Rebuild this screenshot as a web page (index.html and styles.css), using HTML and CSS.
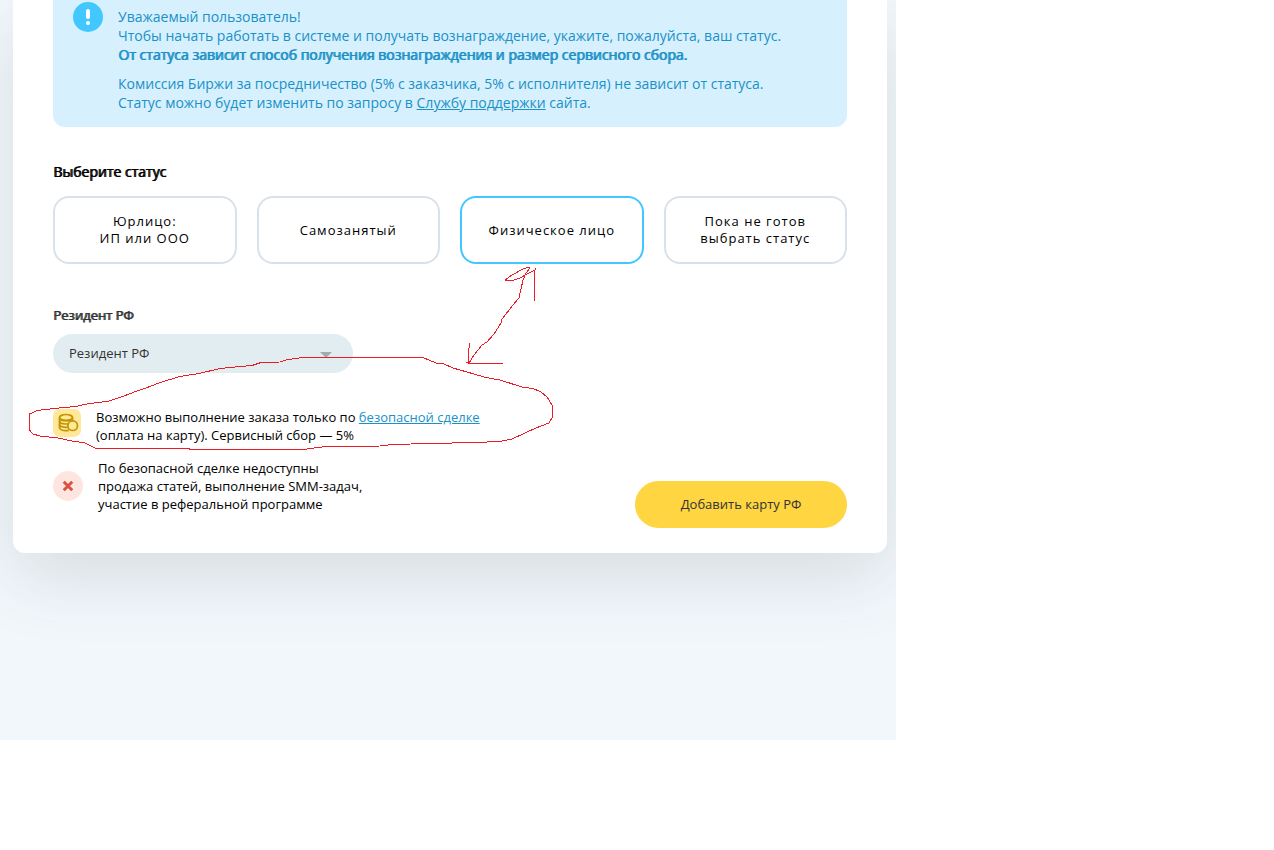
FILE: index.html
```html
<!DOCTYPE html>
<html lang="ru">
<head>
    <meta charset="UTF-8">
    <meta name="viewport" content="width=device-width, initial-scale=1.0">
    <title>Выбор статуса</title>
    <link rel="stylesheet" href="styles.css">
</head>
<body>

<main class="page">
    <form class="card">
        <div class="notice">
            <svg class="notice-icon" viewBox="0 0 30 30" aria-hidden="true">
                <circle cx="15" cy="15" r="15" fill="#42c8ff"/>
                <path d="M15 9v6" stroke="#fff" stroke-width="4" stroke-linecap="round"/>
                <circle cx="15" cy="21" r="2" fill="#fff"/>
            </svg>
            <div class="notice-text">
                <p>Уважаемый пользователь!<br>
                Чтобы начать работать в системе и получать вознаграждение, укажите, пожалуйста, ваш статус.<br>
                <strong>От статуса зависит способ получения вознаграждения и размер сервисного сбора.</strong></p>
                <p>Комиссия Биржи за посредничество (5% с заказчика, 5% с исполнителя) не зависит от статуса.<br>
                Статус можно будет изменить по запросу в <a href="#">Службу поддержки</a> сайта.</p>
            </div>
        </div>

        <h2>Выберите статус</h2>
        <div class="statuses">
            <button type="button" class="status">Юрлицо:<br>ИП или ООО</button>
            <button type="button" class="status">Самозанятый</button>
            <button type="button" class="status active">Физическое лицо</button>
            <button type="button" class="status">Пока не готов<br>выбрать статус</button>
        </div>

        <label class="label" for="resident">Резидент РФ</label>
        <div class="select">
            <select id="resident">
                <option>Резидент РФ</option>
            </select>
            <svg class="select-arrow" viewBox="0 0 12 6" aria-hidden="true">
                <path d="M0 0h12L6 6z" fill="#9fadb3"/>
            </svg>
        </div>

        <div class="bottom">
            <div class="notes">
                <div class="note note-top">
                    <svg class="icon-coins" viewBox="0 0 28 28" aria-hidden="true">
                        <rect width="28" height="28" rx="7" fill="#ffe89a"/>
                        <g fill="none" stroke="#c19400" stroke-width="1.7">
                            <ellipse cx="13" cy="8.500" rx="6.500" ry="3"/>
                            <path d="M6.500 8.500v10c0 1.800 2.900 3.200 6.500 3.200 1 0 1.900-.1 2.700-.3M19.500 8.500v3"/>
                            <path d="M6.500 12c0 1.700 2.900 3 6.500 3 .8 0 1.600-.1 2.300-.2M6.500 15.300c0 1.700 2.900 3 6.500 3h1.600M6.500 8.700c0 1.700 2.900 3 6.500 3 2.800 0 5.200-.8 6.100-2"/>
                            <circle cx="19.700" cy="16.700" r="4.800"/>
                        </g>
                    </svg>
                    <p>Возможно выполнение заказа только по <a href="#">безопасной сделке</a><br>
                    (оплата на карту). Сервисный сбор — 5%</p>
                </div>
                <div class="note">
                    <svg class="icon-cross" viewBox="0 0 30 30" aria-hidden="true">
                        <circle cx="15" cy="15" r="15" fill="#ffe5e0"/>
                        <path d="M11.800 11.800l6.400 6.400M18.200 11.800l-6.400 6.400" stroke="#d95343" stroke-width="3" stroke-linecap="square"/>
                    </svg>
                    <p>По безопасной сделке недоступны<br>
                    продажа статей, выполнение SMM-задач,<br>
                    участие в реферальной программе</p>
                </div>
            </div>
            <button type="submit" class="submit">Добавить карту РФ</button>
        </div>
    </form>

    <!-- пометки от руки -->
    <svg class="marks" viewBox="0 0 896 740" aria-hidden="true">
        <path d="M29.500 430V414L33 412.500 37 410.500 54 408.500 76 406.500 84 404.500 98 402.500 107 401.500 120 397.500 133 392.500 150 386.500 160 382.500 170 379.500 180 376.500 199 373.500 220 368.500 240 366.500 252 365.500 261 362.500 280 362 288 359.500 303 357.500H423L436 363 443 363.500 453 368 474 374 486 377.500 500 380 522 387 533 388.500 541 392 547 397 552.500 406V417L549 423 536 428 525 433 512 439 500 441.500 475 442.500 430 443.500 392 444.500 380 446 322 447 303 449.500H189V448.500H96L85 443 72 441 58 438 40 436 33 434Z"/>
        <path d="M470 343L468.500 350V363M466 362L469 363.500H503M469 363L474 355 482 345 487 342 494 334 501 323 502 319 513 305 519 298 523 280 526 273 530 268 529 267 524 268.500 512 275 505 280 513 280.500 520 278 527 274 535 270 536 268M534.500 270V301"/>
    </svg>
</main>

</body>
</html>
```

FILE: styles.css
```css
* {
    box-sizing: border-box;
}
body {
    margin: 0;
    background: #fff;
    font-family: "Open Sans", "Noto Sans", sans-serif;
    font-size: 13px;
    line-height: 18px;
    color: #000;
}
p {
    margin: 0;
}
a {
    color: #1a91c7;
}
.page {
    position: relative;
    max-width: 896px;
    padding: 0 9px 187px 13px;
    background: #f2f7fc;
    overflow: hidden;
}
.card {
    padding: 0 40px 25px;
    background: #fff;
    border-radius: 0 0 12px 12px;
    box-shadow: 0 25px 70px rgba(50, 70, 60, 0.14);
}
.notice {
    display: flex;
    gap: 15px;
    padding: 2px 20px 15px;
    background: #d7f0fe;
    border-radius: 0 0 12px 12px;
    color: #1a91c7;
    font-size: 14px;
    line-height: 19px;
}
.notice-icon {
    flex: none;
    width: 30px;
    height: 30px;
}
.notice-text {
    padding-top: 5px;
}
.notice-text p + p {
    margin-top: 10px;
}
strong,
h2,
.label {
    font-weight: 400;
    text-shadow: 1px 0 currentColor;
}
h2 {
    margin: 35px 0 15px;
    font-size: 14px;
    line-height: 19px;
}
.statuses {
    display: grid;
    grid-template-columns: repeat(4, 1fr);
    gap: 20px;
}
.status {
    height: 68px;
    padding: 0;
    background: #fff;
    border: 2px solid #d9e2ea;
    border-radius: 16px;
    font: inherit;
    line-height: 17px;
    letter-spacing: 1px;
    color: #000;
    cursor: pointer;
}
.status.active {
    border-color: #42c8ff;
}
.label {
    display: block;
    margin: 42px 0 10px;
    color: #333;
}
.select {
    position: relative;
    max-width: 300px;
}
.select select {
    display: block;
    width: 100%;
    height: 39px;
    padding: 0 16px 2px;
    border: 0;
    border-radius: 20px;
    background: #e2edf2;
    font: inherit;
    color: #333;
    appearance: none;
}
.select-arrow {
    position: absolute;
    top: 18px;
    right: 21px;
    width: 12px;
    height: 6px;
    pointer-events: none;
}
.bottom {
    display: flex;
    justify-content: space-between;
    align-items: flex-end;
    margin-top: 35px;
}
.notes {
    padding-bottom: 15px;
}
.note {
    display: flex;
    align-items: center;
    gap: 15px;
}
.note-top {
    align-items: flex-start;
}
.note + .note {
    margin-top: 15px;
}
.note svg {
    flex: none;
}
.icon-coins {
    width: 28px;
    height: 28px;
    margin-top: 1px;
}
.icon-cross {
    width: 30px;
    height: 30px;
}
.submit {
    width: 212px;
    height: 47px;
    padding: 0 0 2px;
    border: 0;
    border-radius: 24px;
    background: #ffd541;
    font: inherit;
    color: #333;
    cursor: pointer;
}
.marks {
    position: absolute;
    top: 0;
    left: 0;
    width: 896px;
    height: 740px;
    fill: none;
    stroke: #ed1c24;
    stroke-width: 1;
    shape-rendering: crispEdges;
    pointer-events: none;
}
```
